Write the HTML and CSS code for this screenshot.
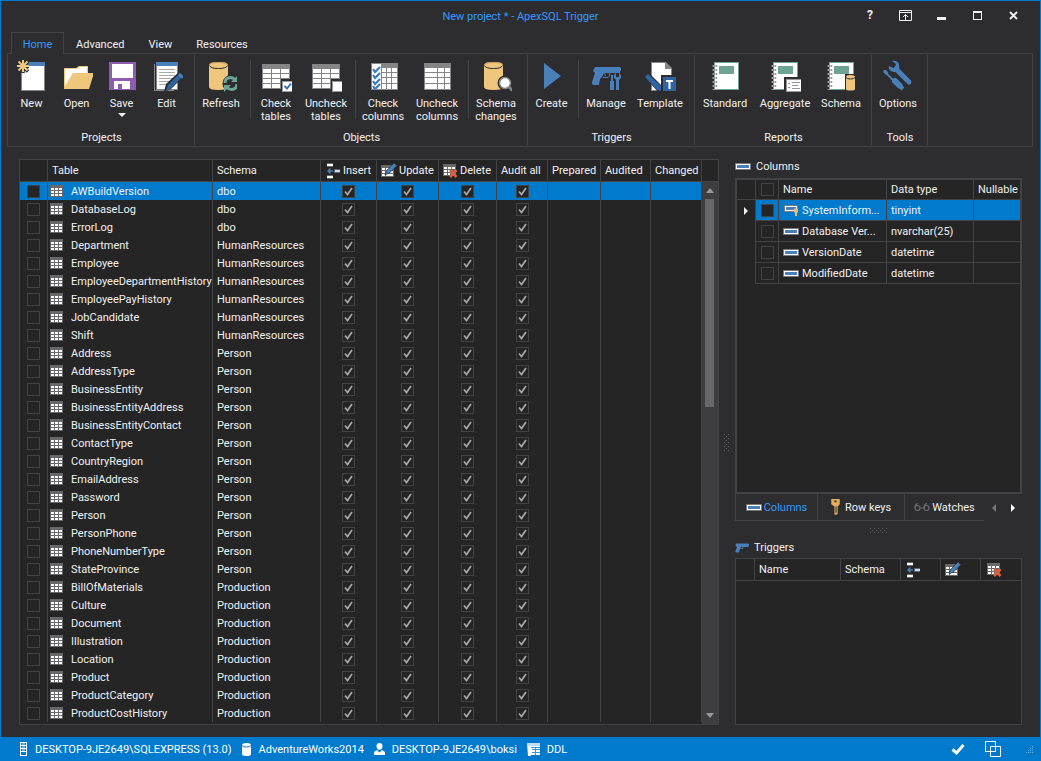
FILE: index.html
```html
<!DOCTYPE html>
<html lang="en">
<head>
<meta charset="utf-8">
<meta name="viewport" content="width=device-width, initial-scale=1">
<title>New project * - ApexSQL Trigger</title>
<link rel="stylesheet" href="styles.css">
</head>
<body>
<svg class="sprite" aria-hidden="true">
  <symbol id="i-table" viewBox="0 0 13 12"><path fill="#68686a" d="M0 0h13v12H0z"/><path fill="#fff" d="M1 3h3v2H1zM5 3h3v2H5zM9 3h3v2H9zM1 6h3v2H1zM5 6h3v2H5zM9 6h3v2H9zM1 9h3v2H1zM5 9h3v2H5zM9 9h3v2H9z"/></symbol>
  <symbol id="i-insert" viewBox="0 0 14 16"><path fill="#68686a" d="M0 0h6v4H0zM0 12h6v4H0zM7 6h6v4H7z"/><path fill="#fff" d="M0 1h6v2H0zM0 13h6v2H0z"/><path fill="#c5dcf2" d="M8 7h5v2H8z"/><path d="M6 8H1M3.500 5.500L1 8l2.500 2.500" fill="none" stroke="#4a80ba" stroke-width="1.500"/></symbol>
  <symbol id="i-update" viewBox="0 0 16 15"><path fill="#68686a" d="M0 2h13v12H0z"/><path fill="#fff" d="M1 5h3v2H1zM5 5h3v2H5zM1 8h3v2H1zM5 8h3v2H5zM1 11h3v2H1zM5 11h7v2H5zM9 8h3v2H9z"/><path d="M4 12l1.500-4.500L13 0l3 2.500L8.500 10z" fill="#4a80ba" stroke="#252526" stroke-width=".6"/></symbol>
  <symbol id="i-delete" viewBox="0 0 15 14"><path fill="#68686a" d="M0 0h13v12H0z"/><path fill="#fff" d="M1 3h3v2H1zM5 3h3v2H5zM9 3h3v2H9zM1 6h3v2H1zM5 6h3v2H5zM1 9h3v2H1zM5 9h2v2H5z"/><path d="M7 6l6.500 7M13.500 6L7 13" stroke="#d9603f" stroke-width="2.600"/></symbol>
  <symbol id="i-column" viewBox="0 0 16 7"><path fill="#77777a" d="M0 0h16v7H0z"/><path fill="#fff" d="M1 1h14v5H1z"/><path fill="#4a80ba" d="M2 2h12v3H2z"/></symbol>
  <symbol id="i-column-key" viewBox="0 0 16 12"><path fill="#77777a" d="M1 1h14v7H1z"/><path fill="#fff" d="M2 2h12v5H2z"/><path fill="#4a80ba" d="M3 3h10v3H3z"/><path fill="#e5bb79" d="M11 5q2-1.500 4 0v3l-1 1v3h-2V9l-1-1z"/></symbol>
  <symbol id="i-key" viewBox="0 0 8 15"><path fill="#e5ac59" fill-rule="evenodd" d="M0 0h8v5L6 7v7l-2 1-1-1V7L0 5zM3 1.500v1.500h2V1.500z"/><path stroke="#2d2d30" d="M4.500 7v6"/></symbol>
  <symbol id="i-glasses" viewBox="0 0 16 8"><g fill="none" stroke="#6b6b6e" stroke-width="1.200"><circle cx="3.500" cy="5" r="2.500"/><circle cx="12.500" cy="5" r="2.500"/><path d="M1 5Q1 1 4 .7M10 5Q10 1 13 .7M6 5h4"/></g></symbol>
  <symbol id="i-gun" viewBox="0 0 28 20"><path fill="#4a80ba" d="M3 1h24v1h1v3h-1v3H17l-1 3q-2 1-6 0L8 19H1q-1-2 1-6l2-5-3-3q0-3 2-4z"/><path fill="#2d2d30" d="M12 7.500h3v1.500l-1 1h-3z"/></symbol>
  <symbol id="i-new" viewBox="0 0 32 32"><path fill="#858585" d="M5 2h24v29H5z"/><path fill="#fff" d="M6 6h22v24H6z"/><path fill="#4a80ba" d="M5 2h24v4H5z"/><path d="M7 0v13M0 6.500h13M2 1.500l10 10M12 1.500l-10 10" stroke="#2d2d30" stroke-width="3.500"/><path d="M7 0v12M1 6h12M2.500 1.500l9 9M11.500 1.500l-9 9" stroke="#f0c980" stroke-width="2"/></symbol>
  <symbol id="i-open" viewBox="0 0 32 32"><path fill="#eec77d" d="M3 8h12l3-2h9v8h5l-6 15H3z"/><path fill="#fff" d="M4 9h12l3-2h7v6H12L4 26z"/><path fill="#eec77d" d="M12 13h21l-5 16H3z"/></symbol>
  <symbol id="i-save" viewBox="0 0 32 32"><path fill="#8e5bae" d="M3 2h27v28H3z"/><path fill="#fff" d="M6 4h21v14H6zM8 21h16v8H8z"/><path fill="#8e5bae" d="M12 24h4v5h-4z"/></symbol>
  <symbol id="i-edit" viewBox="0 0 32 32"><path fill="#858585" d="M3 4h20v27H3z"/><path fill="#2d2d30" d="M4 3h23v27H4z"/><path fill="#858585" d="M5 2h22v28H5z"/><path fill="#fff" d="M6 5h20v24H6z"/><path fill="#4a80ba" d="M5 2h22v4H5z"/><path d="M8 9.500h16M8 12.500h16M8 15.500h16M8 18.500h14M8 21.500h11M8 24.500h9" stroke="#aaa"/><path fill="#2d2d30" d="M13 32l2-8L29 11l5 4-14 14z"/><path fill="#2e64a4" d="M15 31l2-6L29 13l3 3-13 13z"/><path fill="#4a80ba" d="M27 15l2-2 1 1 1 1 2 1-2 3z"/></symbol>
  <symbol id="i-cyl" viewBox="0 0 32 32"><path fill="#eec77d" d="M4 5v22q0 3 9.500 3t9.500-3V5q0-3-9.500-3T4 5z"/><path fill="none" stroke="#2d2d30" d="M4.500 5.500q1 3 9 3t9-3"/><path fill="none" stroke="#c49b54" d="M4.500 5q0-2.500 9-2.500t9 2.500"/></symbol>
  <symbol id="i-refresh" viewBox="0 0 32 32"><use href="#i-cyl"/><circle cx="26" cy="23.500" r="8.500" fill="#2d2d30"/><path fill="none" stroke="#6ea393" stroke-width="3" d="M20 23q0-5 5-5.500 3 0 5 2M32 24q0 5-5 5.500-3 0-5-2"/><path fill="#6ea393" d="M33 15v7h-7zM19 32v-7h7z"/></symbol>
  <symbol id="i-grid" viewBox="0 0 32 32"><path fill="#858585" d="M2 4h28v25H2z"/><path fill="#fff" d="M3 9h8v4H3zM12 9h8v4h-8zM21 9h8v4h-8zM3 14h8v4H3zM12 14h8v4h-8zM21 14h8v4h-8zM3 19h8v4H3zM12 19h8v4h-8zM21 19h8v4h-8zM3 24h8v4H3zM12 24h8v4h-8zM21 24h8v4h-8z"/></symbol>
  <symbol id="i-gridbox" viewBox="0 0 32 32"><use href="#i-grid"/><path fill="#2d2d30" d="M21 19h12v13H21z"/><path fill="#999" d="M22 21h11v11H22z"/><path fill="#fff" d="M23 22h9v9h-9z"/></symbol>
  <symbol id="i-gridcheck" viewBox="0 0 32 32"><use href="#i-gridbox"/><path d="M24.500 26l2.500 2.500 4-5" fill="none" stroke="#2e75b8" stroke-width="2"/></symbol>
  <symbol id="i-cols" viewBox="0 0 32 32"><path fill="#858585" d="M3 3h27v27H3z"/><path fill="#fff" d="M4 8h12v4H4zM4 13h12v4H4zM4 18h12v5H4zM4 24h12v5H4zM17 8h6v4h-6zM24 8h5v4h-5zM17 13h6v4h-6zM24 13h5v4h-5zM17 18h6v5h-6zM24 18h5v5h-5zM17 24h6v5h-6zM24 24h5v5h-5z"/></symbol>
  <symbol id="i-colscheck" viewBox="0 0 32 32"><path fill="#858585" d="M4 3h27v27H4z"/><path fill="#fff" d="M5 4h9v25H5zM15 8h4v4h-4zM20 8h4v4h-4zM25 8h5v4h-5zM15 13h4v4h-4zM20 13h4v4h-4zM25 13h5v4h-5zM15 18h4v5h-4zM20 18h4v5h-4zM25 18h5v5h-5zM15 24h4v5h-4zM20 24h4v5h-4zM25 24h5v5h-5z"/><path d="M6 9l2 3 5-5M6 15l2 3 5-5M6 21l2 3 5-5M6 26l2 3 5-5" fill="none" stroke="#3a7cbe" stroke-width="2.200"/></symbol>
  <symbol id="i-changes" viewBox="0 0 32 32"><use href="#i-cyl"/><path d="M27 26l6 6" stroke="#2d2d30" stroke-width="5"/><circle cx="25" cy="23" r="7.500" fill="#2d2d30"/><path d="M28 26l4.500 4.500" stroke="#858585" stroke-width="3"/><circle cx="25" cy="23" r="5.500" fill="#fff" stroke="#858585" stroke-width="1.500"/></symbol>
  <symbol id="i-create" viewBox="0 0 32 32"><path fill="#4a80ba" d="M8 3l17 13L8 29z"/></symbol>
  <symbol id="i-manage" viewBox="0 0 32 32"><path fill="#4a80ba" d="M5 7h25l1 1v3h-1v2H14l-2 4-2 2-1 6H3q-2-1 0-6l2-6-2-2z"/><path fill="none" stroke="#4a80ba" d="M13 17.500h5l1.500-1.500v-3M14.500 13l1 3"/><path fill="#4a80ba" d="M21 15h2v6h1v9h-4v-9h1zM25 14l1-1v4h3v-4l2 2v3l-2 2v10h-3V20l-2-2v-3z"/></symbol>
  <symbol id="i-template" viewBox="0 0 32 32"><path fill="#858585" d="M7 2h15l6 6v23H7z"/><path fill="#fff" d="M8 3h13v6h6v21H8z"/><path fill="#858585" d="M21 3l6 6h-6z"/><path fill="#2d2d30" d="M0 16l4-4 15 15v5h-5z"/><path fill="#2e64a4" d="M1 17l3-3 13 12 1 5-5-1z"/><path fill="#2d2d30" d="M17 15h16v17H17z"/><path fill="#2e64a4" d="M19 17h13v14H19z"/><path fill="#fff" d="M22 20h7v2h-2.500v7h-2v-7H22z"/></symbol>
  <symbol id="i-report" viewBox="0 0 32 32"><path fill="#6ea393" d="M5 2h25v28H5z"/><path fill="#fff" d="M6 3h23v26H6z"/><path fill="#6ea393" d="M10 6h15v8H10z"/><path d="M7.500 5v25" stroke="#999" stroke-width="1.500" stroke-dasharray="2 2"/><path d="M5 5v25" stroke="#999" stroke-width="3" stroke-dasharray="2 2"/></symbol>
  <symbol id="i-aggregate" viewBox="0 0 32 32"><use href="#i-report" x="-1"/><path fill="#2d2d30" d="M15 17h19v15H15z"/><path fill="#999" d="M17 19h16v13H17z"/><path fill="#fff" d="M18 20h14v11H18z"/><path d="M19 23.500h2M23 22.500h8M19 27.500h2M23 25.500h6M23 28.500h8" stroke="#999"/></symbol>
  <symbol id="i-schema" viewBox="0 0 32 32"><use href="#i-report"  x="-1"/><path fill="#2d2d30" d="M20 14h11v17H20z"/><path fill="#eec77d" d="M21 17q0-2 4.500-2t4.500 2v12q0 1.500-4.500 1.500T21 29z"/><path fill="none" stroke="#2d2d30" d="M21 17.500q1 1.500 4.500 1.500t4.500-1.500"/></symbol>
  <symbol id="i-options" viewBox="0 0 32 32"><path stroke="#4a80ba" stroke-width="5" stroke-linecap="round" d="M14 9l13 13"/><path fill="#4a80ba" d="M10 1q5-1 7 3 1 4-1 7-4 2-7 0-3-2-2-5l4 2 2-1 1-3z"/><path stroke="#4a80ba" stroke-width="3.500" stroke-linecap="round" d="M3 11.500l1.500 1.500"/><path stroke="#4a80ba" stroke-width="1.800" d="M4 13l8 8"/><path stroke="#4a80ba" stroke-width="6" stroke-linecap="round" d="M13 21l4.500 4.500"/><path stroke="#4a80ba" stroke-width="4" d="M18 26l3 3"/></symbol>
</svg>

<div class="window">
  <header class="titlebar">
    <h1 class="title">New project * - ApexSQL Trigger</h1>
    <div class="winbuttons">
      <button class="winbtn help" aria-label="Help">?</button>
      <button class="winbtn" aria-label="Ribbon display"><svg width="14" height="12" fill="none" stroke="#f1f1f1"><path d="M.5 .5h12v10H.5zM1 2.500h12M6.500 10V4.500M4 7l2.500-2.500L9 7"/></svg></button>
      <button class="winbtn" aria-label="Minimize"><svg width="10" height="10"><path fill="#f1f1f1" d="M0 6h9v3H0z"/></svg></button>
      <button class="winbtn" aria-label="Maximize"><svg width="10" height="10"><path fill="#f1f1f1" fill-rule="evenodd" d="M0 0h9v9H0zM1 2v6h7V2z"/></svg></button>
      <button class="winbtn" aria-label="Close"><svg width="10" height="10" stroke="#f1f1f1" stroke-width="1.800"><path d="M1 1l7 7M8 1L1 8"/></svg></button>
    </div>
  </header>

  <nav class="menu" aria-label="Ribbon tabs">
    <button class="menutab active">Home</button>
    <button class="menutab">Advanced</button>
    <button class="menutab">View</button>
    <button class="menutab">Resources</button>
  </nav>

  <section class="ribbon" aria-label="Home">
    <div class="group">
      <div class="tools">
        <button class="tool w45"><svg><use href="#i-new"/></svg>New</button>
        <button class="tool w45"><svg><use href="#i-open"/></svg>Open</button>
        <button class="tool w45"><svg><use href="#i-save"/></svg>Save<span class="caret"></span></button>
        <button class="tool w45"><svg><use href="#i-edit"/></svg>Edit</button>
      </div>
      <h2 class="caption">Projects</h2>
    </div>
    <div class="group">
      <div class="tools">
        <button class="tool w50"><svg><use href="#i-refresh"/></svg>Refresh</button>
        <span class="bar"></span>
        <button class="tool w50"><svg><use href="#i-gridcheck"/></svg>Check<br>tables</button>
        <button class="tool w50"><svg><use href="#i-gridbox"/></svg>Uncheck<br>tables</button>
        <span class="bar"></span>
        <button class="tool w54"><svg><use href="#i-colscheck"/></svg>Check<br>columns</button>
        <button class="tool w54"><svg><use href="#i-cols"/></svg>Uncheck<br>columns</button>
        <span class="bar"></span>
        <button class="tool w54"><svg><use href="#i-changes"/></svg>Schema<br>changes</button>
      </div>
      <h2 class="caption">Objects</h2>
    </div>
    <div class="group">
      <div class="tools">
        <button class="tool w45"><svg><use href="#i-create"/></svg>Create</button>
        <span class="bar"></span>
        <button class="tool w54"><svg><use href="#i-manage"/></svg>Manage</button>
        <button class="tool w54"><svg><use href="#i-template"/></svg>Template</button>
      </div>
      <h2 class="caption">Triggers</h2>
    </div>
    <div class="group">
      <div class="tools">
        <button class="tool w58"><svg><use href="#i-report"/></svg>Standard</button>
        <button class="tool w62"><svg><use href="#i-aggregate"/></svg>Aggregate</button>
        <button class="tool w50"><svg><use href="#i-schema"/></svg>Schema</button>
      </div>
      <h2 class="caption">Reports</h2>
    </div>
    <div class="group">
      <div class="tools">
        <button class="tool w50"><svg><use href="#i-options"/></svg>Options</button>
      </div>
      <h2 class="caption">Tools</h2>
    </div>
  </section>

  <main class="work">
    <section class="tables" aria-label="Tables">
      <table class="grid main-grid">
        <colgroup><col class="c28"><col><col class="c108"><col class="c56"><col class="c62"><col class="c58"><col class="c51"><col class="c53"><col class="c50"><col class="c51"></colgroup>
        <thead><tr>
          <th></th><th>Table</th><th>Schema</th>
          <th class="inset"><span class="iconhead"><svg width="14" height="16"><use href="#i-insert"/></svg>Insert</span></th>
          <th><span class="iconhead"><svg width="16" height="15"><use href="#i-update"/></svg>Update</span></th>
          <th><span class="iconhead"><svg width="15" height="14"><use href="#i-delete"/></svg>Delete</span></th>
          <th>Audit all</th><th>Prepared</th><th>Audited</th><th>Changed</th>
        </tr></thead>
        <tbody id="rows"></tbody>
      </table>
      <div class="scrollcol">
        <div class="scrollhead"></div>
        <div class="scrollbar">
          <span class="arrow up"></span>
          <div class="track"><div class="thumb"></div></div>
          <span class="arrow down"></span>
        </div>
      </div>
    </section>

    <div class="splitter"><svg width="6" height="17"><path d="M.5 0v17M4.500 0v17" stroke="#5f5f62" stroke-dasharray="1 3"/><path d="M2.500 2v15" stroke="#5f5f62" stroke-dasharray="1 3"/></svg></div>

    <aside class="side">
      <h2 class="panelname"><svg width="16" height="7"><use href="#i-column"/></svg>Columns</h2>
      <div class="columnbox">
        <table class="grid col-grid">
          <colgroup><col class="c19"><col class="c23"><col><col class="c87"><col class="c46"></colgroup>
          <thead><tr><th></th><th class="mid"><input type="checkbox" class="box" aria-label="Select all columns"></th><th>Name</th><th>Data type</th><th>Nullable</th></tr></thead>
          <tbody>
            <tr class="selected"><td class="marker"><span class="pointer"></span></td><td class="mid"><input type="checkbox" class="box" aria-label="SystemInform..."></td><td><span class="colname"><svg width="16" height="12"><use href="#i-column-key"/></svg>SystemInform...</span></td><td>tinyint</td><td></td></tr>
            <tr><td class="marker"></td><td class="mid"><input type="checkbox" class="box" aria-label="Database Ver..."></td><td><span class="colname"><svg width="16" height="7"><use href="#i-column"/></svg>Database Ver...</span></td><td>nvarchar(25)</td><td></td></tr>
            <tr><td class="marker"></td><td class="mid"><input type="checkbox" class="box" aria-label="VersionDate"></td><td><span class="colname"><svg width="16" height="7"><use href="#i-column"/></svg>VersionDate</span></td><td>datetime</td><td></td></tr>
            <tr><td class="marker"></td><td class="mid"><input type="checkbox" class="box" aria-label="ModifiedDate"></td><td><span class="colname"><svg width="16" height="7"><use href="#i-column"/></svg>ModifiedDate</span></td><td>datetime</td><td></td></tr>
          </tbody>
        </table>
      </div>
      <div class="tabs">
        <button class="tab on"><svg width="16" height="7"><use href="#i-column"/></svg>Columns</button>
        <button class="tab keys"><svg width="9" height="16"><use href="#i-key"/></svg>Row keys</button>
        <button class="tab"><svg width="16" height="8"><use href="#i-glasses"/></svg>Watches</button>
        <button class="step off" aria-label="Previous tabs"></button>
        <button class="step" aria-label="Next tabs"></button>
      </div>
      <div class="hsplit"><svg width="18" height="6"><path d="M0 .5h18M0 4.500h18" stroke="#5f5f62" stroke-dasharray="1 3"/><path d="M2 2.500h16" stroke="#5f5f62" stroke-dasharray="1 3"/></svg></div>
      <h2 class="panelname"><svg width="14" height="10"><use href="#i-gun"/></svg>Triggers</h2>
      <div class="triggerbox">
        <table class="grid trig-grid">
          <colgroup><col class="c19"><col><col class="c60"><col class="c40"><col class="c40"><col class="c40"></colgroup>
          <thead><tr><th></th><th>Name</th><th>Schema</th>
            <th class="inset" aria-label="Insert"><svg width="14" height="16"><use href="#i-insert"/></svg></th>
            <th aria-label="Update"><svg width="16" height="15"><use href="#i-update"/></svg></th>
            <th class="inset" aria-label="Delete"><svg width="15" height="14"><use href="#i-delete"/></svg></th></tr></thead>
        </table>
      </div>
    </aside>
  </main>

  <footer class="status">
    <span class="stat"><svg width="8" height="14"><path fill="#fff" fill-rule="evenodd" d="M0 0h7v14H0zM1 1v2h5V1zM1 4v2h5V4zM1 7v2h5V7zM1 10v3h5v-3z"/><path d="M2 2h3M2 5h3M2 8h3" stroke="#fff" stroke-width=".8"/></svg>DESKTOP-9JE2649\SQLEXPRESS (13.0)</span>
    <span class="stat"><svg width="10" height="13"><path fill="#fff" d="M0 2q0-2 4.500-2T9 2v9q0 2-4.500 2T0 11z"/><path d="M0 2.500q1 1.500 4.500 1.500T9 2.500" fill="none" stroke="#007acc"/></svg>AdventureWorks2014</span>
    <span class="stat"><svg width="11" height="12"><path fill="#fff" d="M5.500 0q3 0 3 3T7 6.500L5.500 7 4 6.500Q2.500 6 2.500 3t3-3zM0 12V9l3-2 2.500 2.500L8 7l3 2v3z"/></svg>DESKTOP-9JE2649\boksi</span>
    <span class="stat"><svg width="13" height="13"><path fill="#fff" d="M0 0h13v12H4v1H1z"/><path fill="#c5dcf2" d="M0 0h13v3H0z"/><path d="M5 6.500h8M5 9.500h8M8.500 4v8M4 4.500h9" stroke="#3795d8"/></svg>DDL</span>
    <span class="statright">
      <svg width="14" height="12"><path d="M1.500 6.500l4 3.500L12.500 2" fill="none" stroke="#fff" stroke-width="3"/></svg>
      <svg width="16" height="16"><path d="M.5 .5h10v10H.5zM5.500 5.500h10v10h-10z" fill="none" stroke="#fff"/></svg>
      <svg class="grip" width="9" height="9" stroke="#6fb5e4" stroke-dasharray="1 1"><path d="M8 1.500h1M6 3.500h3M4 5.500h5M2 7.500h7"/></svg>
    </span>
  </footer>
</div>
<script src="rows.js"></script>
</body>
</html>
```
FILE: styles.css
```css
* { box-sizing: border-box; }

body {
  margin: 0;
  background: #2d2d30;
  color: #f1f1f1;
  font-family: Roboto, "Noto Sans", sans-serif;
  font-size: 11px;
  line-height: 13px;
}

button {
  font: inherit;
  color: inherit;
  background: none;
  border: 0;
  padding: 0;
}

h1, h2 { margin: 0; font-size: 11px; font-weight: 400; }

svg { flex: none; overflow: visible; }

.sprite { position: absolute; width: 0; height: 0; }

.window {
  display: flex;
  flex-direction: column;
  min-height: 100vh;
  border: 1px solid #007acc;
  border-bottom: 0;
}

/* Title bar */
.titlebar {
  display: grid;
  grid-template-columns: 1fr auto 1fr;
  align-items: center;
  height: 31px;
}
.title { grid-column: 2; color: #3399ff; }
.winbuttons { display: flex; justify-content: flex-end; padding-right: 8px; }
.winbtn { display: grid; place-items: center; width: 36px; height: 22px; padding-bottom: 2px; }
.help { font-weight: 700; font-size: 12px; }

/* Ribbon tabs */
.menu { display: flex; height: 21px; padding-left: 10px; }
.menutab { padding: 2px 12px 0; height: 22px; }
.menutab.active {
  position: relative;
  color: #3399ff;
  width: 53px;
  padding: 1px 0 0;
  background: #2d2d30;
  border: 1px solid #434346;
  border-bottom: 0;
}

/* Ribbon */
.ribbon {
  display: grid;
  grid-template-columns: 187px 333px 167px 177px 56px 1fr;
  margin: 0 7px 0 6px;
  padding: 1px 0;
  border: 1px solid #434346;
}
.group {
  display: flex;
  flex-direction: column;
  justify-content: space-between;
  height: 90px;
  padding: 5px 0 1px 1px;
  border-right: 1px solid #434346;
}
.tools { display: flex; }
.tool { display: block; align-self: flex-start; text-align: center; }
.tool svg { display: block; width: 32px; height: 32px; margin: 0 auto 5px; }
.w45 { width: 45px; }
.w50 { width: 50px; }
.w54 { width: 54px; }
.w58 { width: 58px; }
.w62 { width: 62px; }
.bar { width: 1px; height: 59px; margin-left: 4px; background: #434346; }
.caret {
  display: block;
  width: 0;
  margin: 3px auto 0;
  border: 4px solid transparent;
  border-top-color: #f1f1f1;
  border-bottom: 0;
}
.caption { text-align: center; }

/* Work area */
.work { flex: 1; display: flex; padding: 12px 18px; }

.grid { border-collapse: separate; border-spacing: 0; table-layout: fixed; width: 100%; }
.grid th, .grid td {
  padding: 0 0 0 4px;
  border-right: 1px solid #434346;
  text-align: left;
  font-weight: 400;
  white-space: nowrap;
  overflow: hidden;
}
.grid th { height: 22px; border-bottom: 1px solid #434346; }
.grid th.inset { padding-left: 6px; }
.grid svg { vertical-align: middle; }
.selected td { background: #007acc; }

.c19 { width: 19px; }
.c23 { width: 23px; }
.c28 { width: 28px; }
.c40 { width: 40px; }
.c46 { width: 46px; }
.c50 { width: 50px; }
.c51 { width: 51px; }
.c53 { width: 53px; }
.c56 { width: 56px; }
.c58 { width: 58px; }
.c60 { width: 60px; }
.c62 { width: 62px; }
.c87 { width: 87px; }
.c108 { width: 108px; }

.tables {
  flex: 1;
  display: flex;
  min-width: 0;
  background: #252526;
  border: 1px solid #434346;
}
.main-grid { flex: 1; align-self: flex-start; }
.main-grid td { height: 18px; }
.main-grid td.mid, .grid .mid { padding: 0; text-align: center; }
.iconhead { display: flex; align-items: center; gap: 2px; }
.tname { display: flex; align-items: center; gap: 8px; }
.main-grid td.name { padding-left: 2px; }

.box {
  appearance: none;
  display: block;
  width: 13px;
  height: 13px;
  margin: 0 auto;
  background: #252526;
  border: 1px solid #434346;
}
.box:checked {
  background-image: url("data:image/svg+xml,%3Csvg xmlns='http://www.w3.org/2000/svg' width='11' height='11'%3E%3Cpath d='M2 5.500l2.500 3L9 2' fill='none' stroke='%23a8a8a8' stroke-width='1.700'/%3E%3C/svg%3E");
}

.scrollcol { display: flex; flex-direction: column; width: 16px; }
.scrollhead { height: 22px; border-bottom: 1px solid #434346; }
.scrollbar {
  flex: 1;
  display: flex;
  flex-direction: column;
  align-items: center;
  background: #3e3e40;
}
.track { flex: 1; align-self: stretch; padding: 0 4px 0 3px; }
.thumb { height: 41%; background: #686868; }
.arrow { width: 0; border: 4px solid transparent; }
.arrow.up { margin: 6px 0; border-top: 0; border-bottom: 5px solid #999; }
.arrow.down { margin: 6px 0; border-bottom: 0; border-top: 5px solid #999; }

.splitter { display: flex; align-items: center; justify-content: center; width: 16px; }

/* Side panels */
.side { display: flex; flex-direction: column; width: 287px; }
.panelname { display: flex; align-items: center; gap: 5px; height: 15px; }
.columnbox {
  flex: 1;
  margin-top: 4px;
  background: #252526;
  border: 2px solid #434346;
}
.col-grid th { height: 20px; }
.col-grid td { height: 21px; border-bottom: 1px solid #434346; }
.col-grid td.marker { padding: 0; border-bottom: 0; background: #252526; }
.col-grid th:last-child, .col-grid td:last-child { border-right: 0; }
.pointer {
  display: block;
  width: 0;
  margin: 0 auto;
  border: 4px solid transparent;
  border-left-color: #f1f1f1;
  border-right: 0;
}
.colname { display: flex; align-items: center; gap: 3px; }

.tabs { display: flex; height: 27px; }
.tab {
  display: flex;
  align-items: center;
  justify-content: center;
  gap: 2px;
  width: 87px;
  border-right: 1px solid #434346;
  border-bottom: 1px solid #434346;
}
.tab.on { width: 83px; color: #3399ff; border-left: 1px solid #434346; }
.tab.keys { gap: 5px; }
.tab:nth-child(3) { width: 79px; border-right: 0; }
.step { width: 19px; display: grid; place-items: center; }
.step::before {
  content: "";
  border: 4px solid transparent;
  border-left-color: #fff;
  border-right: 0;
}
.step.off::before { border-left: 0; border-right: 4px solid #77777a; }
.hsplit { display: flex; justify-content: center; align-items: center; height: 19px; }
.triggerbox {
  height: 161px;
  margin-top: 3px;
  background: #252526;
  border: 1px solid #434346;
}
.trig-grid th:last-child { border-right: 0; }

/* Status bar */
.status {
  display: flex;
  align-items: center;
  height: 24px;
  padding: 0 7px 0 19px;
  gap: 10px;
  background: #007acc;
  color: #fff;
}
.stat { display: flex; align-items: center; gap: 7px; }
.statright { display: flex; align-items: center; gap: 20px; margin-left: auto; }
.grip { margin-left: 3px; }

/* Side and bottom spacing of the work area */
.work { padding-bottom: 12px; }
.triggerbox { height: 167px; }
```
FILE: rows.js
```js
const groups = [
  ["dbo", ["AWBuildVersion", "DatabaseLog", "ErrorLog"]],
  ["HumanResources", ["Department", "Employee", "EmployeeDepartmentHistory", "EmployeePayHistory", "JobCandidate", "Shift"]],
  ["Person", ["Address", "AddressType", "BusinessEntity", "BusinessEntityAddress", "BusinessEntityContact", "ContactType", "CountryRegion", "EmailAddress", "Password", "Person", "PersonPhone", "PhoneNumberType", "StateProvince"]],
  ["Production", ["BillOfMaterials", "Culture", "Document", "Illustration", "Location", "Product", "ProductCategory", "ProductCostHistory"]]
];
const box = (label, on) =>
  `<td class="mid"><input type="checkbox" class="box" aria-label="${label}"${on ? " checked" : ""}></td>`;
const html = groups.flatMap(([schema, names]) => names.map(name =>
  `<tr>${box(name, false)}` +
  `<td class="name"><span class="tname"><svg width="13" height="12"><use href="#i-table"/></svg>${name}</span></td>` +
  `<td>${schema}</td>` +
  ["insert", "update", "delete", "all"].map(k => box(`${name} ${k}`, true)).join("") +
  `<td></td><td></td><td></td></tr>`)).join("");
const body = document.getElementById("rows");
body.innerHTML = html;
body.rows[0].classList.add("selected");
```
